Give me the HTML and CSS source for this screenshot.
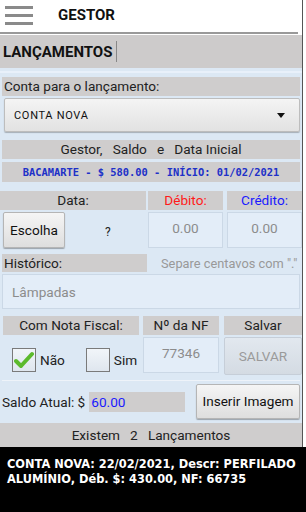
FILE: index.html
```html
<!DOCTYPE html>
<html lang="pt">
<head>
    <meta charset="UTF-8">
    <title>Gestor</title>
    <link rel="stylesheet" href="styles.css">
</head>
<body>
<div class="screen">
    <div class="topbar">
        <svg class="menu" width="28" height="22" viewBox="0 0 28 22">
            <rect x="0" y="3" width="28" height="3" fill="#8a8a8a"/>
            <rect x="0" y="11" width="28" height="3" fill="#8a8a8a"/>
            <rect x="0" y="19" width="28" height="3" fill="#8a8a8a"/>
        </svg>
        <span class="app-name">GESTOR</span>
    </div>
    <div class="rule"></div>
    <div class="title">LANÇAMENTOS<span class="cursor"></span></div>

    <div class="main">
        <div class="strip"></div>
        <div class="bar bar-left">Conta para o lançamento:</div>
        <div class="spinner">
            <span>CONTA NOVA</span>
            <span class="arrow"></span>
        </div>

        <div class="bar bar-center info-title">Gestor,   Saldo   e   Data Inicial</div>
        <div class="bar bar-center info">BACAMARTE - $ 580.00 - INÍCIO: 01/02/2021</div>

        <div class="row labels">
            <div class="bar bar-center col-data">Data:</div>
            <div class="bar bar-center col-val red">Débito:</div>
            <div class="bar bar-center col-val blue">Crédito:</div>
        </div>
        <div class="row values">
            <div class="col-data date-pick">
                <div class="btn btn-escolha">Escolha</div>
                <span class="question">?</span>
            </div>
            <div class="field col-val">0.00</div>
            <div class="field col-val">0.00</div>
        </div>

        <div class="row hist">
            <div class="bar bar-left hist-label">Histórico:</div>
            <div class="hint">Separe centavos com "."</div>
        </div>
        <div class="field text-field">Lâmpadas</div>

        <div class="row labels nf-labels">
            <div class="bar bar-center col-nota">Com Nota Fiscal:</div>
            <div class="bar bar-center col-nf">Nº da NF</div>
            <div class="bar bar-center col-save">Salvar</div>
        </div>
        <div class="row nf-values">
            <div class="col-nota checks">
                <span class="check on">
                    <svg width="20" height="18" viewBox="0 0 20 18">
                        <path d="M2 10 L7 15 L18 3" fill="none" stroke="#5cba2c" stroke-width="4" stroke-linecap="round" stroke-linejoin="round"/>
                    </svg>
                </span>
                <span class="check-text">Não</span>
                <span class="check"></span>
                <span class="check-text">Sim</span>
            </div>
            <div class="field col-nf">77346</div>
            <div class="btn btn-disabled col-save">SALVAR</div>
        </div>

        <div class="divider"></div>

        <div class="row saldo">
            <span class="saldo-label">Saldo Atual: $</span>
            <span class="saldo-value">60.00</span>
            <div class="btn btn-img">Inserir Imagem</div>
        </div>

        <div class="bar bar-center count">Existem   2   Lançamentos</div>
    </div>
</div>
<div class="list">
    CONTA NOVA: 22/02/2021, Descr: PERFILADO ALUMÍNIO, Déb. $: 430.00, NF: 66735
</div>
</body>
</html>
```
FILE: styles.css
```css
*{
    margin: 0;
    padding: 0;
    box-sizing: border-box;
}
body{
    width: 306px;
    height: 512px;
    overflow: hidden;
    background: #fff;
    font-family: Roboto, "Liberation Sans", sans-serif;
    font-size: 13.6px;
    color: #222;
}
.screen{
    width: 303px;
    border-right: 1px solid #555;
}
.topbar{
    height: 32px;
    display: flex;
    align-items: center;
}
.menu{
    margin-left: 5px;
    margin-top: -4px;
}
.app-name{
    margin-left: 25px;
    font-weight: bold;
    font-size: 15px;
    color: #111;
    margin-top: -2px;
}
.rule{
    height: 2px;
    margin-right: 4px;
    background: #999;
}
.title{
    margin-top: 1px;
    height: 33px;
    background: #cdcbcb;
    font-weight: bold;
    font-size: 15px;
    color: #111;
    padding-left: 3px;
    display: flex;
    align-items: center;
}
.cursor{
    display: inline-block;
    width: 1px;
    height: 21px;
    background: #888;
    margin-left: 4px;
}
.main{
    background: #dce8f4;
}
.strip{
    height: 9px;
    border-top: 3px solid #dce8f4;
    border-bottom: 4px solid #dce8f4;
    background: #e8f0fa;
}
.bar{
    background: #cfcdcd;
    height: 19px;
    line-height: 19px;
    margin: 0 2px;
    white-space: pre;
}
.bar-left{
    padding-left: 2px;
}
.bar-center{
    text-align: center;
}
.spinner{
    height: 34px;
    margin: 2px 2px 0 4px;
    background: linear-gradient(#f4f4f4, #e2e2e2);
    border: 1px solid #bdbdbd;
    border-radius: 2px;
    box-shadow: 0 1px 1px rgba(0,0,0,0.25);
    display: flex;
    align-items: center;
    justify-content: space-between;
    padding: 0 14px 0 9px;
    font-size: 11px;
    letter-spacing: 0.7px;
    color: #111;
}
.arrow{
    width: 0;
    height: 0;
    border-left: 4px solid transparent;
    border-right: 4px solid transparent;
    border-top: 5px solid #111;
}
.info-title{
    margin-top: 8px;
}
.info{
    margin-top: 3px;
    height: 20px;
    line-height: 20px;
    font-family: "DejaVu Sans Mono", monospace;
    font-weight: bold;
    font-size: 10.4px;
    color: #2030c8;
}
.row{
    display: flex;
}
.labels{
    margin-top: 9px;
}
.labels .bar{
    margin: 0;
}
.col-data{
    width: 146px;
    flex-shrink: 0;
}
.col-val{
    width: 75px;
    margin-left: 2px;
    flex-shrink: 0;
}
.labels .col-val{
    margin-left: 2px;
}
.labels .col-val + .col-val{
    margin-left: 4px;
}
.red{
    color: #ff1a1a;
}
.blue{
    color: #1a1aff;
}
.values{
    margin-top: 2px;
    height: 36px;
}
.values .col-val + .col-val{
    margin-left: 4px;
}
.date-pick{
    display: flex;
    align-items: center;
}
.btn{
    background: linear-gradient(#f5f5f5, #dedede);
    border: 1px solid #b5b5b5;
    border-radius: 2px;
    box-shadow: 0 1px 1px rgba(0,0,0,0.3);
    display: flex;
    align-items: center;
    justify-content: center;
    color: #111;
    flex-shrink: 0;
}
.btn-escolha{
    width: 62px;
    height: 36px;
    margin-left: 3px;
}
.question{
    margin-left: 40px;
    font-size: 12px;
    margin-top: 4px;
}
.field{
    background: #e3edf8;
    border: 1px solid #cbd8e6;
    color: #8c8c8c;
    display: flex;
    justify-content: center;
    padding-top: 7px;
}
.hist{
    margin-top: 6px;
    height: 18px;
    align-items: center;
}
.hist-label{
    width: 145px;
    height: 18px;
    line-height: 18px;
    flex-shrink: 0;
}
.hint{
    margin-left: 12px;
    color: #999;
    font-size: 12.8px;
    white-space: nowrap;
}
.text-field{
    height: 35px;
    margin: 2px 2px 0 2px;
    justify-content: flex-start;
    padding: 0 0 0 9px;
    align-items: center;
}
.nf-labels{
    margin-top: 7px;
}
.col-nota{
    width: 136px;
    margin-left: 3px;
    flex-shrink: 0;
}
.nf-labels .col-nota{
    margin-left: 3px;
}
.col-nf{
    width: 76px;
    margin-left: 4px;
    flex-shrink: 0;
}
.nf-labels .col-nf{
    margin-left: 4px;
}
.col-save{
    width: 78px;
    margin-left: 4px;
}
.nf-labels .col-save{
    margin-left: 5px;
}
.nf-values{
    margin-top: 2px;
    height: 39px;
}
.checks{
    display: flex;
    align-items: center;
    padding-left: 9px;
    padding-top: 6px;
}
.check{
    width: 24px;
    height: 24px;
    flex-shrink: 0;
    border: 1px solid #7a7a7a;
    background: linear-gradient(#f1f5f9, #dfe6ee);
    display: flex;
    align-items: center;
    justify-content: center;
}
.check-text{
    margin-left: 4px;
    margin-right: 21px;
}
.check-text:last-child{
    margin-right: 0;
}
.nf-values .col-nf{
    height: 36px;
}
.btn-disabled{
    height: 38px;
    color: #9a9a9a;
    background: linear-gradient(#e2e8ef, #d4dbe3);
    border-color: #c6ced8;
    box-shadow: none;
    margin-left: 5px;
}
.divider{
    margin: 4px 2px 0 2px;
    height: 1px;
    background: #b8c2cc;
    border-bottom: 1px solid #eef3f9;
}
.saldo{
    margin-top: 2px;
    height: 36px;
    align-items: center;
}
.saldo-label{
    margin-left: 2px;
    margin-top: 2px;
}
.saldo-value{
    margin-left: 4px;
    margin-top: 2px;
    width: 96px;
    height: 20px;
    line-height: 20px;
    background: #cfcdcd;
    color: #1a1aff;
    padding-left: 2px;
}
.btn-img{
    margin-left: auto;
    margin-right: 2px;
    width: 104px;
    height: 35px;
}
.count{
    margin: 4px 0 0 0;
    height: 24px;
    line-height: 24px;
}
.list{
    background: #000;
    color: #fff;
    height: 65px;
    padding: 10px 6px 0 7px;
    font-family: "DejaVu Sans", sans-serif;
    font-weight: bold;
    font-size: 11.4px;
    line-height: 15px;
}
```
